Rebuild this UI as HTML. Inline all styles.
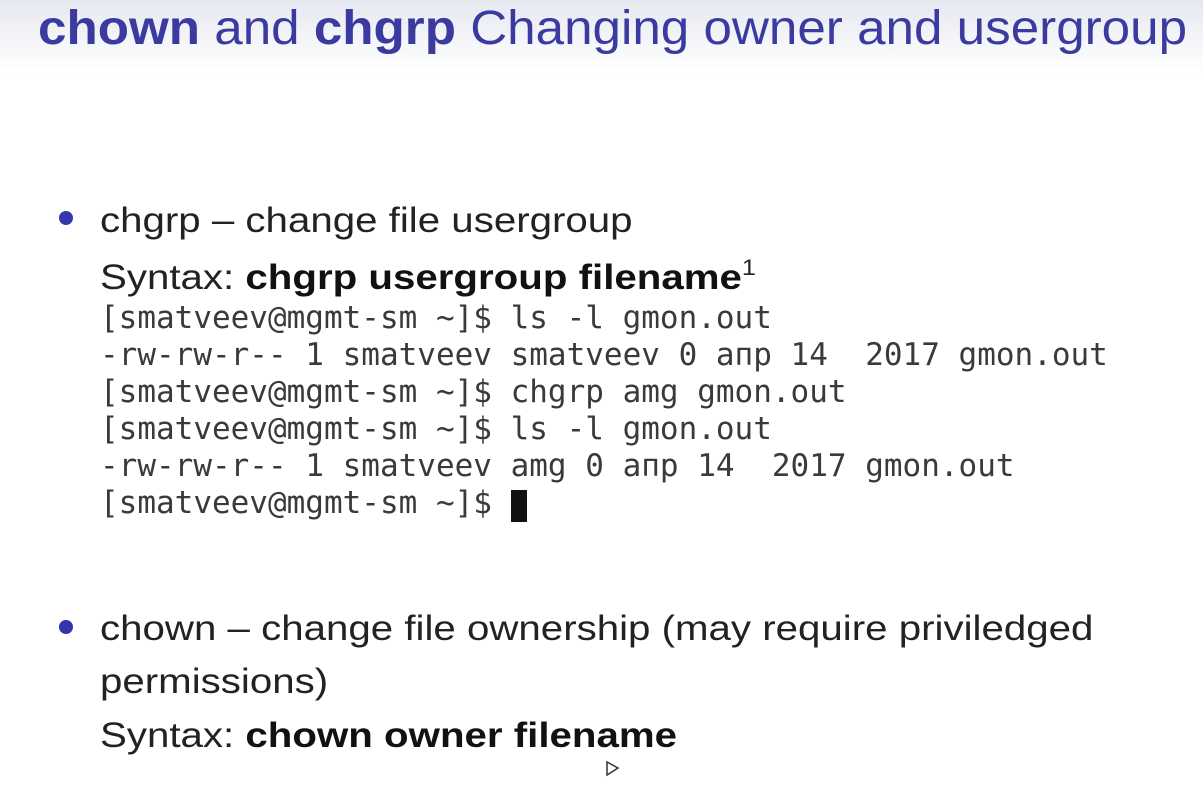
<!DOCTYPE html>
<html><head><meta charset="utf-8"><style>
html,body{margin:0;padding:0}
body{width:1203px;height:796px;position:relative;overflow:hidden;background:#fff;font-family:"Liberation Sans",sans-serif}
.top{position:absolute;left:0;top:0;width:1203px;height:75px;background:linear-gradient(#e6e8f0,#f6f7fa 60%,#fff)}
.t{position:absolute;white-space:pre;line-height:1;transform-origin:0 0}
.title{left:38px;top:5px;font-size:48px;color:#3a3aa0;transform:scaleX(1.066)}
.title b{font-weight:bold}
.b{font-size:35px;color:#222;left:100px;transform:scaleX(1.15)}
.m{font-family:"DejaVu Sans Mono",monospace;font-size:31px;color:#3a3a3a;left:100px}
.dot{position:absolute;width:14px;height:14px;border-radius:50%;background:#3535b0;left:59px}
.cur{position:absolute;left:511px;top:490px;width:16px;height:32px;background:#111}
</style></head><body>
<div class="top"></div>
<div class="t title"><b>chown</b> and <b>chgrp</b> Changing owner and usergroup</div>
<div class="dot" style="top:211px"></div>
<div class="t b" style="top:203px">chgrp – change file usergroup</div>
<div class="t b" style="top:257px">Syntax: <b style="color:#111">chgrp usergroup filename</b><sup style="font-size:22px;vertical-align:14px">1</sup></div>
<div class="t m" style="top:303px">[smatveev@mgmt-sm ~]$ ls -l gmon.out</div>
<div class="t m" style="top:340px">-rw-rw-r-- 1 smatveev smatveev 0 апр 14  2017 gmon.out</div>
<div class="t m" style="top:377px">[smatveev@mgmt-sm ~]$ chgrp amg gmon.out</div>
<div class="t m" style="top:414px">[smatveev@mgmt-sm ~]$ ls -l gmon.out</div>
<div class="t m" style="top:451px">-rw-rw-r-- 1 smatveev amg 0 апр 14  2017 gmon.out</div>
<div class="t m" style="top:488px">[smatveev@mgmt-sm ~]$</div>
<div class="cur"></div>
<div class="dot" style="top:620px"></div>
<div class="t b" style="top:611px">chown – change file ownership (may require priviledged</div>
<div class="t b" style="top:664px">permissions)</div>
<div class="t b" style="top:718px">Syntax: <b style="color:#111">chown owner filename</b></div>
<svg style="position:absolute;left:605px;top:760px" width="16" height="18"><path d="M2 2 L2 15 L13 8 Z" fill="#fff" stroke="#333" stroke-width="1.5"/></svg>
</body></html>
